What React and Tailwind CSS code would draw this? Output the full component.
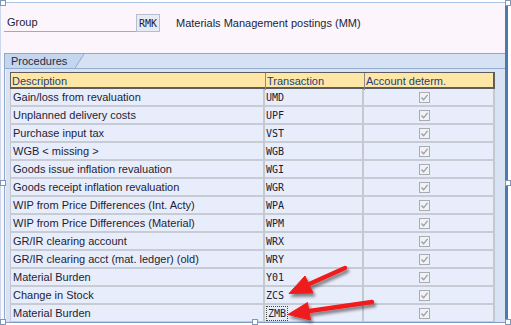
import React from 'react';

const rows = [
  ['Gain/loss from revaluation', 'UMD'],
  ['Unplanned delivery costs', 'UPF'],
  ['Purchase input tax', 'VST'],
  ['WGB < missing >', 'WGB'],
  ['Goods issue inflation revaluation', 'WGI'],
  ['Goods receipt inflation revaluation', 'WGR'],
  ['WIP from Price Differences (Int. Acty)', 'WPA'],
  ['WIP from Price Differences (Material)', 'WPM'],
  ['GR/IR clearing account', 'WRX'],
  ['GR/IR clearing acct (mat. ledger) (old)', 'WRY'],
  ['Material Burden', 'Y01'],
  ['Change in Stock', 'ZCS'],
  ['Material Burden', 'ZMB'],
];

const mono = "font-['DejaVu_Sans_Mono','Liberation_Mono',monospace]";

function CheckBox() {
  return (
    <div className="w-[11px] h-[11px] border border-[#a9abb3] bg-[#f1f2f6] flex items-center justify-center">
      <svg width="9" height="9" viewBox="0 0 9 9">
        <path d="M1.5 4.5 L3.6 6.8 L7.6 1.8" fill="none" stroke="#9a9ca4" strokeWidth="1.3" />
      </svg>
    </div>
  );
}

function Handle({ className }) {
  return <div className={`absolute w-[6px] h-[6px] bg-white border border-[#7f97bb] ${className}`} />;
}

function Arrows() {
  return (
    <svg className="absolute left-0 top-0" width="511" height="325" viewBox="0 0 511 325">
      <defs>
        <filter id="sh" x="-20%" y="-40%" width="140%" height="180%">
          <feDropShadow dx="2" dy="3" stdDeviation="1.6" floodColor="#000" floodOpacity="0.45" />
        </filter>
      </defs>
      <g filter="url(#sh)" fill="#ee1c1c" stroke="#ee1c1c">
        <line x1="345" y1="268" x2="306" y2="285.5" strokeWidth="4.5" strokeLinecap="round" />
        <polygon points="289,293.5 313,293 305,276" strokeWidth="1" strokeLinejoin="round" />
        <line x1="372" y1="302" x2="306" y2="311.5" strokeWidth="4.5" strokeLinecap="round" />
        <polygon points="288,314.5 310.5,320 307.5,302.5" strokeWidth="1" strokeLinejoin="round" />
      </g>
    </svg>
  );
}

export default function App() {
  return (
    <div className="w-[511px] h-[325px] bg-white relative overflow-hidden font-['Liberation_Sans',Arial,sans-serif] text-[11px] text-[#1d1d35]">
      <div className="mt-[2px] h-[321px] w-[508px] border-t border-t-[#a9c3e4] border-l border-l-[#ccd8ea] border-r-[3px] border-r-[#4f79ad] border-b border-b-[#7d9cc6] bg-[#fcf6fc] pl-[3px] pt-[11px] flex flex-col">
        <div className="flex h-[18px]">
          <div className="w-[132px] border-b border-[#a4a8b8] pl-[3px] flex items-center">Group</div>
          <div className={`w-[24px] border border-[#b7bdcc] bg-[#e6ebf4] flex items-center justify-center text-[10px] ${mono}`}>RMK</div>
          <div className="ml-[16px] flex items-center">Materials Management postings (MM)</div>
        </div>

        <div className="mt-[21px] flex-1 flex flex-col border-l border-t border-[#8fa9cc] min-h-0">
          <div className="h-[15px] flex bg-[#d6e2f3] border-b border-[#93add2]">
            <div className="w-[70px] bg-[#c3d6ee] pl-[6px] flex items-center text-[#1f2a44]">Procedures</div>
            <svg width="10" height="14" viewBox="0 0 10 14" className="shrink-0">
              <polygon points="0,0 9,0 0,14" fill="#c3d6ee" />
              <line x1="9" y1="0" x2="0" y2="14" stroke="#8fabd3" strokeWidth="1" />
            </svg>
          </div>
          <div className="flex-1 bg-[#d9e3f4] pl-[4px] pt-[3px] border-l border-[#eef2fa] min-h-0 overflow-hidden">
            <div className="w-[485px]">
              <div className="grid grid-cols-[255px_99px_131px] h-[17px] bg-[#fee6a6] border-t border-l border-[#5d5d5d] border-b-2 border-r-2 text-[#24407a]">
                <div className="pl-[1px] flex items-center border-r border-[#8b8b8b]">Description</div>
                <div className="pl-[1px] flex items-center border-r border-[#8b8b8b]">Transaction</div>
                <div className="pl-[1px] flex items-center">Account determ.</div>
              </div>
              {rows.map(([desc, code], i) => (
                <div key={i} className="grid grid-cols-[255px_99px_131px] h-[18px] bg-[#e8edfb] border-b-2 border-[#c9cbd4]">
                  <div className="pl-[2px] flex items-center border-l border-r-2 border-[#c6c8d0]">{desc}</div>
                  <div className={`pl-[1px] flex items-center border-r-2 border-[#c6c8d0] text-[10px] text-[#202030] ${mono}`}>
                    {code === 'ZMB' ? (
                      <span className="border border-dotted border-[#444] px-[1px] leading-[13px]">{code}</span>
                    ) : (
                      code
                    )}
                  </div>
                  <div className="flex items-center justify-center border-r-2 border-[#c6c8d0] pr-[8px]">
                    <CheckBox />
                  </div>
                </div>
              ))}
            </div>
          </div>
        </div>
      </div>

      <Handle className="left-0 top-0" />
      <Handle className="right-0 top-0" />
      <Handle className="left-0 top-[180px]" />
      <Handle className="right-0 top-[180px]" />
      <Handle className="left-0 bottom-0" />
      <Handle className="left-[252px] bottom-0" />
      <Handle className="right-0 bottom-0" />
      <Arrows />
    </div>
  );
}
